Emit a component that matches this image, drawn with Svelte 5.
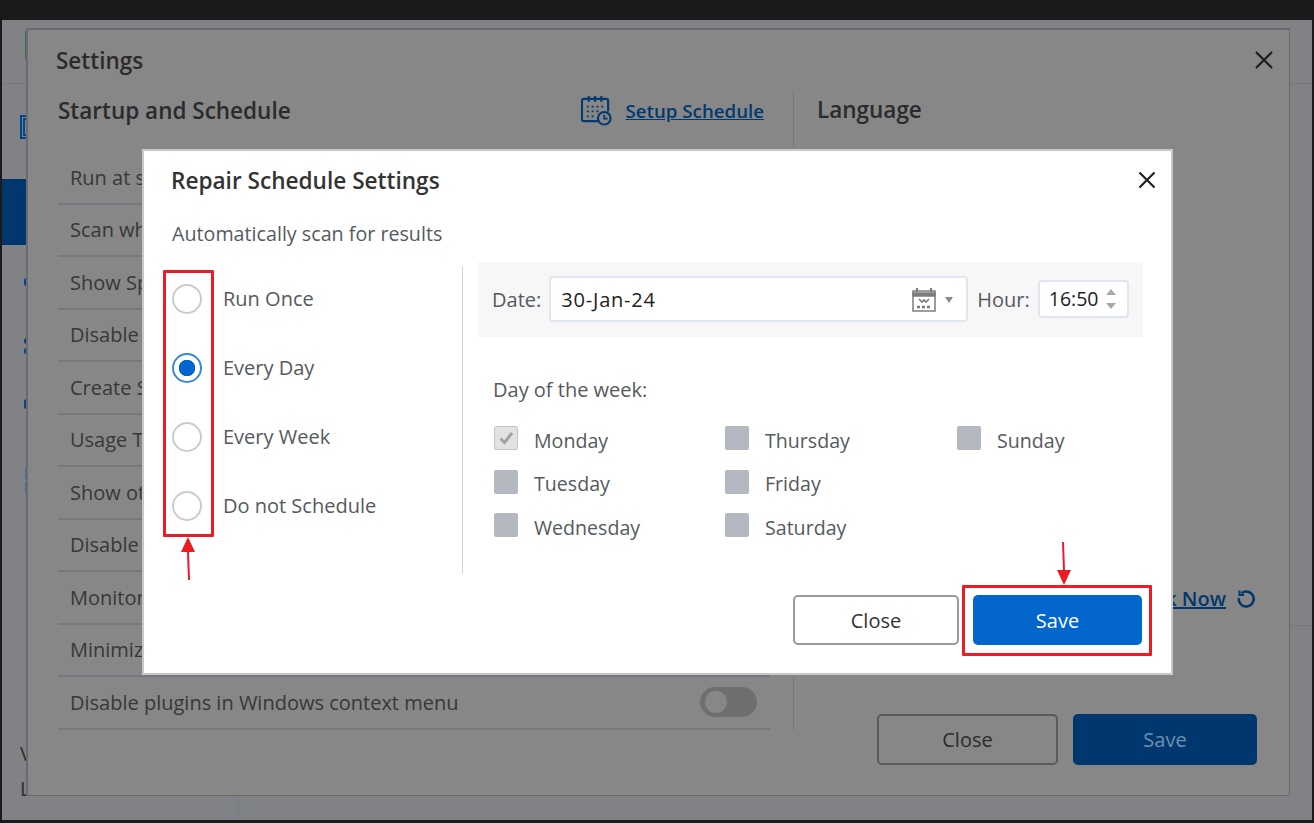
<script>
  const rows = ['Run at startup','Scan when idle','Show Speed','Disable notifications','Create System Restore','Usage Tracking','Show other offers','Disable startup','Monitor updates','Minimize to tray','Disable plugins in Windows context menu'];
  const modes = [{l:'Run Once'},{l:'Every Day',on:true},{l:'Every Week'},{l:'Do not Schedule'}];
  const days = [
    {l:'Monday',on:true},{l:'Thursday'},{l:'Sunday'},
    {l:'Tuesday'},{l:'Friday'},null,
    {l:'Wednesday'},{l:'Saturday'},null
  ];
</script>

<div class="window">
  <header class="topbar"><span class="logo"></span><span class="winctl"><i></i><i></i></span></header>
  <div class="winbody">
    <aside class="side">
      <svg class="sideicon" width="20" height="24" viewBox="0 0 20 24" fill="none" stroke="#00468c" stroke-width="2"><rect x="1" y="1" width="18" height="22"/><rect x="4" y="4" width="12" height="16"/></svg>
      <div class="sideactive"></div>
      <i class="dot d1"></i><i class="dot d2"></i><i class="dot d2b"></i><i class="dot d3"></i>
      <i class="thin t1"></i><i class="thin t2"></i>
      <div class="sidefoot"><span>V</span><span>L</span></div>
    </aside>
    <div class="winmain"><div class="winline"></div></div>
  </div>
</div>

<section class="settings">
  <header class="sethead">
    <h2>Settings</h2>
    <svg class="x" width="20" height="20" viewBox="0 0 20 20" stroke="#1c1c1c" stroke-width="2.2"><path d="M2 2 18 18M18 2 2 18"/></svg>
  </header>
  <div class="setbody">
    <div class="setleft">
      <div class="sechead">
        <h3>Startup and Schedule</h3>
        <span class="schedlink">
          <svg width="31" height="31" viewBox="0 0 32 32" fill="none" stroke="#003a70" stroke-width="2.2">
            <path d="M19 27H3a2 2 0 0 1-2-2V6a2 2 0 0 1 2-2h23a2 2 0 0 1 2 2v11"/>
            <path d="M8 1v6M14.500 1v6M21 1v6" />
            <path d="M6 12h2M11 12h2M16 12h2M21 12h2M6 17h2M11 17h2M16 17h2M6 22h2M11 22h2" stroke-width="1.800"/>
            <circle cx="24" cy="24" r="6.500"/><path d="M24 20.500V24.500h3.500" stroke-width="1.800"/>
          </svg>
          <u>Setup Schedule</u>
        </span>
      </div>
      <ul class="rows">
        {#each rows as r, i}
          <li>{r}{#if i === rows.length - 1}<span class="toggle"><i></i></span>{/if}</li>
        {/each}
      </ul>
    </div>
    <div class="setright">
      <h3>Language</h3>
      <div class="checknow">
        <u>Check Now</u>
        <svg width="20" height="20" viewBox="0 0 20 20" fill="none" stroke="#00376f" stroke-width="2.400"><path d="M5.500 4.200A7.500 7.500 0 1 1 2.800 9"/><path d="M3.500 1.500v4.500H8" stroke-width="2"/></svg>
      </div>
      <div class="setbtns">
        <button class="btn ghost dimghost">Close</button>
        <button class="btn dimsave">Save</button>
      </div>
    </div>
  </div>
</section>

<section class="modal">
  <header class="mhead">
    <h3>Repair Schedule Settings</h3>
    <svg width="20" height="20" viewBox="0 0 20 20" stroke="#222" stroke-width="2.200"><path d="M2.500 2.500 17.500 17.500M17.500 2.500 2.500 17.500"/></svg>
  </header>
  <p class="msub">Automatically scan for results</p>
  <div class="mbody">
    <div class="modes">
      {#each modes as m}
        <label class="mode"><span class="radio" class:on={m.on}></span>{m.l}</label>
      {/each}
    </div>
    <div class="mright">
      <div class="datebar">
        <span>Date:</span>
        <div class="datein">
          <b class="dateval">30-Jan-24</b>
          <svg width="24" height="24" viewBox="0 0 24 24" fill="none" stroke="#7d7d7d" stroke-width="1.500">
            <rect x="1" y="3" width="22" height="20" />
            <path d="M1 5h22V8H1z" fill="#7d7d7d"/>
            <path d="M5 0v4M19 0v4" stroke-width="2"/>
            <path d="M7 11l3 3 2-2 2 2 3-3" stroke-width="1.600"/>
            <path d="M5 19h3M10 19h3M15 19h3" stroke-width="2.500"/>
          </svg>
          <i class="caret"></i>
        </div>
        <span>Hour:</span>
        <div class="hourin">
          <b class="hourval">16:50</b>
          <span class="spin"><i class="up"></i><i class="down"></i></span>
        </div>
      </div>
      <p class="dow">Day of the week:</p>
      <div class="daygrid">
        {#each days as d}
          {#if d}
            <label class="day"><span class="cb" class:on={d.on}>{#if d.on}<svg width="16" height="16" viewBox="0 0 16 16" fill="none" stroke="#a3a3a3" stroke-width="3"><path d="M2.500 8.500 6.500 12.500 14 3"/></svg>{/if}</span>{d.l}</label>
          {:else}
            <span></span>
          {/if}
        {/each}
      </div>
    </div>
  </div>
  <footer class="mfoot">
    <button class="btn ghost">Close</button>
    <button class="btn primary">Save</button>
  </footer>
</section>

<div class="mark m1"></div>
<div class="mark m2"></div>
<svg class="arrows" width="1314" height="823" viewBox="0 0 1314 823" fill="#ed1c24" stroke="#ed1c24">
  <path d="M189 580 188 552" stroke-width="2" />
  <path d="M188 537 195 552H181Z" stroke="none"/>
  <path d="M1063 542 1064 571" stroke-width="2" />
  <path d="M1064 585 1057 570H1071Z" stroke="none"/>
</svg>

<style>
  :global(body) {
    margin: 0;
    background: #1a1a1a;
    font-family: "Open Sans", "Noto Sans", sans-serif;
    overflow: hidden;
  }
  h2, h3, p, ul { margin: 0; padding: 0; }
  .window {
    margin: 20px 2px 0;
    height: 800px;
    background: #808285;
    display: flex;
    flex-direction: column;
    position: relative;
  }
  .topbar {
    height: 64px;
    border-bottom: 1px solid #75777a;
    box-sizing: border-box;
    display: flex;
    justify-content: space-between;
    align-items: center;
  }
  .logo { width: 3px; height: 30px; margin-left: 23px; margin-top: -14px; background: #3e6c55; border-radius: 2px 0 0 2px; }
  .winctl { display: flex; flex-direction: column; gap: 17px; margin-right: 22px; margin-top: -14px; }
  .winctl i { width: 2px; height: 2px; background: #333; }
  .winbody { flex: 1; display: flex; }
  .side { width: 236px; border-right: 1px solid #6f7a8e; position: relative; }
  .sideicon { position: absolute; left: 18px; top: 31px; }
  .sideactive { position: absolute; left: 0; top: 95px; width: 236px; height: 66px; background: #00376f; }
  .dot { position: absolute; left: 22px; width: 5px; border-radius: 3px; background: #00468c; }
  .d1 { top: 194px; height: 8px; } .d2 { top: 254px; height: 6px; } .d2b { top: 264px; height: 6px; } .d3 { top: 315px; height: 10px; }
  .thin { position: absolute; left: 23px; width: 1px; height: 11px; background: #3a6ea5; }
  .t1 { top: 384px; } .t2 { top: 398px; }
  .sidefoot { position: absolute; left: 18px; top: 656px; display: flex; flex-direction: column; gap: 8px; font-size: 20px; color: #2c2c2c; }
  .winmain { flex: 1; position: relative; }
  .winline { position: absolute; right: 0; top: 541px; width: 24px; height: 1px; background: #75777a; }

  .settings {
    position: absolute;
    left: 26px;
    top: 28px;
    width: 1264px;
    height: 768px;
    box-sizing: border-box;
    background: #878787;
    border: 1px solid #6b6b6b;
    border-width: 2px 1px 1px 2px;
    color: #2b2b2b;
  }
  .sethead { height: 60px; padding: 0 15px 0 28px; display: flex; justify-content: space-between; align-items: center; }
  .sethead h2 { font-size: 22.500px; font-weight: 600; color: #2b2b2b; }
  .setbody { display: flex; }
  .setleft { width: 712px; margin-left: 30px; }
  .sechead { height: 40px; display: flex; justify-content: space-between; align-items: center; }
  .sechead h3 { font-size: 22.500px; font-weight: 600; }
  .schedlink { display: flex; align-items: center; gap: 14px; color: #003a70; font-size: 18.700px; font-weight: 600; margin-right: 6px; }
  .rows { list-style: none; margin-top: 22px; }
  .rows li {
    height: 52.500px;
    box-sizing: border-box;
    border-bottom: 2px solid #75787c;
    padding-left: 12px;
    display: flex;
    align-items: center;
    justify-content: space-between;
    font-size: 20px;
    color: #383838;
  }
  .toggle { width: 57px; height: 30px; border-radius: 15px; background: #6f6f6f; margin-right: 13px; display: flex; align-items: center; padding-left: 5px; box-sizing: border-box; }
  .toggle i { width: 22px; height: 22px; border-radius: 50%; background: #878787; }
  .setright { margin-left: 23px; padding-left: 23px; width: 495px; box-sizing: border-box; border-left: 1px solid #75787c; height: 640px; position: relative; }
  .setright h3 { font-size: 22.500px; font-weight: 600; line-height: 40px; }
  .checknow { position: absolute; right: 32px; top: 495px; display: flex; align-items: center; gap: 10px; color: #00376f; font-size: 20px; font-weight: 600; }
  .setbtns { position: absolute; right: 31px; top: 624px; display: flex; gap: 15px; }

  .btn {
    height: 50px;
    border-radius: 5px;
    font: 400 20px "Open Sans", "Noto Sans", sans-serif;
    border: 0;
    box-sizing: border-box;
    padding: 0;
  }
  .ghost { width: 166px; background: #fff; border: 2px solid #9a9a9a; color: #333; }
  .primary { width: 169px; background: #0366cc; color: #fff; }
  .dimghost { width: 181px; height: 51px; background: transparent; border-color: #5a5a5a; color: #2b2b2b; }
  .dimsave { width: 184px; height: 51px; background: #00376f; color: #6f8fb0; }

  .modal {
    position: absolute;
    left: 142px;
    top: 149px;
    width: 1031px;
    height: 526px;
    box-sizing: border-box;
    background: #fff;
    border: 2px solid #c8c8c8;
    display: flex;
    flex-direction: column;
    color: #555a60;
  }
  .mhead { display: flex; justify-content: space-between; align-items: center; height: 58px; padding: 0 14px 0 27px; }
  .mhead h3 { font-size: 22.600px; font-weight: 600; color: #333; }
  .msub { font-size: 19.700px; margin: 11px 0 0 28px; line-height: 27px; }
  .mbody { display: flex; height: 312px; margin-top: 15px; }
  .modes { width: 319px; box-sizing: border-box; border-right: 1px solid #d4d4d4; margin-top: 4px; padding-left: 28px; height: 308px; }
  .mode { display: flex; align-items: center; gap: 21px; height: 69px; font-size: 20px; }
  .mode:first-child { margin-top: -2px; }
  .radio { width: 30px; height: 30px; border-radius: 50%; border: 2px solid #c8ccd2; box-sizing: border-box; }
  .radio.on { border-color: #3a87d8; background: radial-gradient(circle, #0366cc 0 8px, #fff 8.500px); }
  .mright { width: 665px; margin-left: 15px; }
  .datebar { height: 75px; background: #f7f7f8; display: flex; align-items: center; padding-left: 14px; font-size: 20px; box-sizing: border-box; }
  .datein { width: 419px; height: 46px; margin: -2px 9px 0 8px; background: #fff; border: 2px solid #e0e6ef; border-radius: 4px; box-sizing: border-box; display: flex; align-items: center; padding: 2px 13px 0 10px; }
  b { font-weight: 500; color: #222; }
  .dateval { flex: 1; font-size: 20px; letter-spacing: 0.800px; }
  .hourval { font-size: 19.500px; }
  .caret { margin-left: 9px; border: 4.500px solid transparent; border-top: 6px solid #8a8a8a; border-bottom: 0; }
  .hourin { width: 91px; height: 38px; margin: -2px 0 0 8px; background: #fff; border: 2px solid #e0e6ef; border-radius: 4px; box-sizing: border-box; display: flex; align-items: center; justify-content: space-between; padding: 0 11px 0 9px; }
  .spin { display: flex; flex-direction: column; gap: 8px; }
  .up { border: 5px solid transparent; border-bottom: 6px solid #a8a8a8; border-top: 0; }
  .down { border: 5px solid transparent; border-top: 6px solid #a8a8a8; border-bottom: 0; }
  .dow { font-size: 20px; margin: 39px 0 0 15px; line-height: 27px; }
  .daygrid { display: grid; grid-template-columns: 231px 232px 1fr; grid-auto-rows: 43.500px; margin: 24px 0 0 16px; }
  .day { display: flex; align-items: center; gap: 16px; font-size: 19.600px; height: 26px; }
  .cb { width: 24px; height: 24px; margin-top: -4px; border-radius: 2px; background: #b4b8c0; box-sizing: border-box; display: flex; align-items: center; justify-content: center; }
  .cb.on { background: #e2e2e2; border: 1px solid #c6c6c6; }
  .mfoot { display: flex; justify-content: flex-end; gap: 14px; padding-right: 29px; margin-top: 21px; }

  .mark { position: absolute; border: 3px solid #ed1c24; box-sizing: border-box; border-radius: 1px; }
  .m1 { left: 163px; top: 270px; width: 51px; height: 267px; }
  .m2 { left: 962px; top: 585px; width: 190px; height: 71px; }
  .arrows { position: absolute; left: 0; top: 0; pointer-events: none; }
</style>
